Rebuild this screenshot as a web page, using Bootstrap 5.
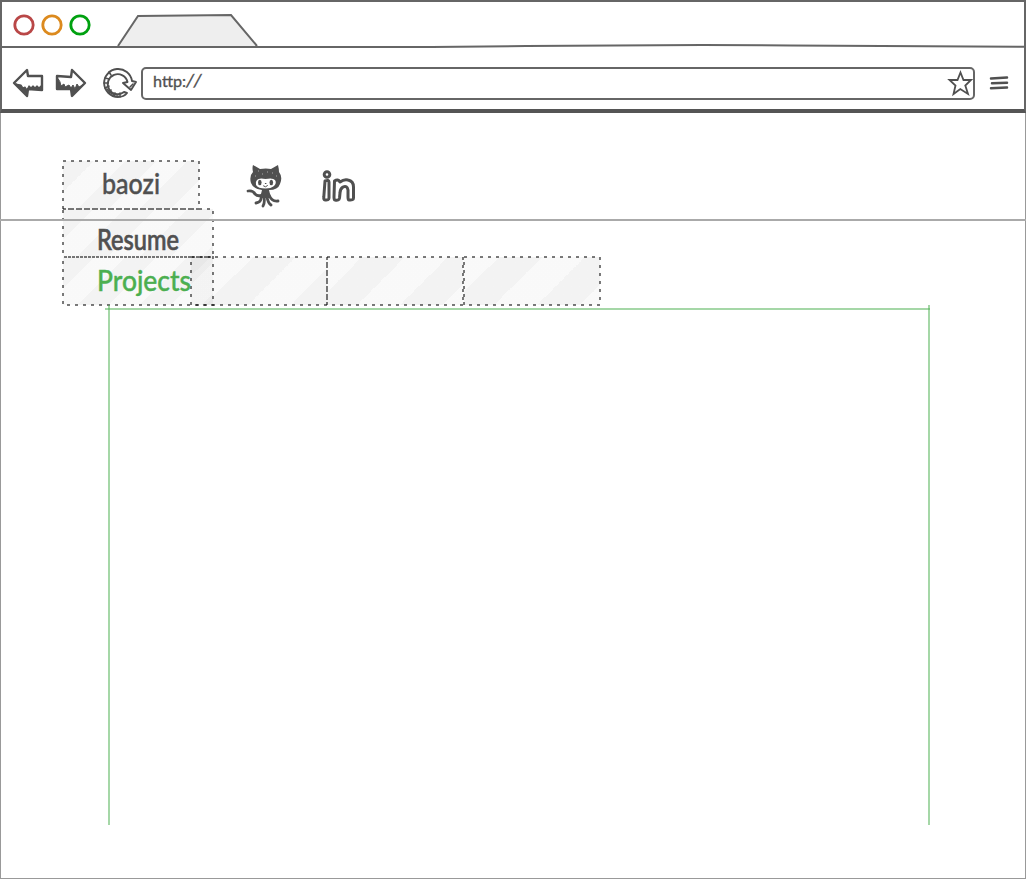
<!DOCTYPE html>
<html lang="en">
<head>
<meta charset="utf-8">
<meta name="viewport" content="width=device-width, initial-scale=1">
<title>baozi</title>
<link href="https://cdn.jsdelivr.net/npm/bootstrap@5.3.0/dist/css/bootstrap.min.css" rel="stylesheet">
<style>
body{font-family:Lato,"Open Sans",sans-serif;color:#505050;background:#fff}
svg{display:block;overflow:visible}
.browser{height:879px}
.chrome-head{height:113px;border:2px solid #666;border-bottom:4px solid #555}
.tab-strip{height:44px;padding-left:11px}
.tool-row{height:63px;padding:7px 15px 0 10px}
.address{height:33px;border:2px solid #666;border-radius:5px;margin-left:5px}
.canvas-area{border:1px solid #999;border-top:0}
.node{position:absolute}
.rule{position:absolute;background:#aaa;height:2px}
.guide{position:absolute;background:rgba(76,175,80,.5)}
.sketch{fill:none;stroke:#505050;stroke-linecap:round;stroke-linejoin:round}
.frame-line{fill:none;stroke:#000;stroke-opacity:.52;stroke-width:2;stroke-dasharray:3 5}
.arrow-next{margin-left:11px}
.reload{margin-left:15px}
.menu-lines{margin-left:16px}
</style>
</head>
<body>
<div class="browser d-flex flex-column position-relative overflow-hidden">
  <svg width="0" height="0" class="position-absolute">
    <defs>
      <linearGradient id="stripe" gradientUnits="userSpaceOnUse" x1="0" y1="0" x2="31" y2="31" spreadMethod="repeat">
        <stop offset="0" stop-opacity=".047"/><stop offset=".5" stop-opacity=".047"/>
        <stop offset=".5" stop-opacity=".023"/><stop offset="1" stop-opacity=".023"/>
      </linearGradient>
      <linearGradient id="wide" gradientUnits="userSpaceOnUse" x1="17.5" y1="17.5" x2="60.5" y2="60.5" spreadMethod="repeat">
        <stop offset="0" stop-opacity=".047"/><stop offset=".5" stop-opacity=".047"/>
        <stop offset=".5" stop-opacity=".023"/><stop offset="1" stop-opacity=".023"/>
      </linearGradient>
      <linearGradient id="wide-shift" href="#wide" gradientTransform="translate(27 0)"/>
    </defs>
  </svg>

  <header class="chrome-head flex-shrink-0">
    <div class="tab-strip d-flex">
      <svg width="78" height="44" fill="none" stroke-width="2.8">
        <circle cx="11" cy="23" r="9.2" stroke="#b94747"/>
        <circle cx="39" cy="23" r="9.2" stroke="#dc8a1e"/>
        <circle cx="67" cy="23" r="9.2" stroke="#00a110"/>
      </svg>
      <svg width="140" height="44" class="ms-4"><path d="M3 44 23 14 116 13 142 44" fill="#eee" stroke="#666" stroke-width="2"/></svg>
    </div>
    <svg width="100%" height="2" viewBox="0 0 1022 2" preserveAspectRatio="none"><path d="M0 1H430C520 0 630-1.200 700-1C810-.5 930 .7 1022 .8" fill="none" stroke="#666" stroke-width="2"/></svg>
    <div class="tool-row d-flex align-items-center">
      <svg width="32" height="30" viewBox="0 0 32 30" class="sketch flex-shrink-0" stroke-width="2.4">
        <path d="M2 15 15 2 16 8 30 8 30 22 16 21 15 28Z"/>
        <path d="M4 16 15 26V21H29L29 18 27 20 25 18 23 20 21 18 19 20 17 18 15 22 13 19 11 20 9 17Z" fill="#505050" stroke-width="1.2"/>
      </svg>
      <svg width="32" height="30" viewBox="0 0 32 30" class="sketch flex-shrink-0 arrow-next" stroke-width="2.4">
        <path d="M2 8 16 9 17 2 30 15 17 28 16 21 2 21Z"/>
        <path d="M3 11V20H16L18 27 28 17 24 19 22 16 20 21 18 17 16 20 14 17 12 18 10 19 9 16 6 18 5 14Z" fill="#505050" stroke-width="1"/>
      </svg>
      <svg width="34" height="32" viewBox="0 0 34 32" class="sketch flex-shrink-0 reload" stroke-width="1.9">
        <path d="M25 26Q22 30 16 30A14 14 0 1 1 30 14L34 15 29 23 21 16 25.500 15A10 10 0 1 0 22 25Z"/>
        <path d="M3 11 7 12M2 16H6M3 21 7 19M7 26 9 23M12 29 13 26M18 30V26M7 5 9 8" stroke-width="1.6"/>
        <path d="M28 20 31 17M5 22Q9 28 16 28" stroke-width="1.6"/>
      </svg>
      <div class="address d-flex flex-grow-1 align-items-center justify-content-between">
        <svg width="65" height="28"><g font-size="15" font-weight="400" fill="#505050" stroke="#505050" stroke-width=".3"><text x="10" y="18" textLength="52" lengthAdjust="spacingAndGlyphs">http:<tspan font-size="18" font-style="italic" letter-spacing="3">//</tspan></text></g></svg>
        <svg width="25" height="28" viewBox="0 0 25 28" class="sketch" stroke-width="1.8"><path d="M12.500 3.500 15.500 11 23 11 17.300 16.500 20 25 12.300 20 5.500 25 7.500 16.500 1.500 11H9.500Z" stroke-linejoin="miter"/></svg>
      </div>
      <svg width="18" height="14" viewBox="0 0 18 14" class="sketch flex-shrink-0 menu-lines" stroke-width="2.5"><path d="M0 2.500 16 1.500M1 7.200 16 6.800M0 12.300 16 11.500"/></svg>
    </div>
  </header>

  <main class="canvas-area flex-grow-1"></main>

  <!-- freely placed wireframe items -->
  <svg class="node" style="left:63px;top:161px" width="136" height="48"><rect width="136" height="48" fill="url(#stripe)"/><path class="frame-line" d="M0 0H136V48H0Z"/></svg>
  <svg class="node" style="left:63px;top:209px" width="150" height="48"><rect width="150" height="48" fill="url(#stripe)"/><path class="frame-line" d="M0 0H150V48H0Z"/></svg>
  <svg class="node" style="left:63px;top:257px" width="150" height="48"><rect width="150" height="48" fill="url(#stripe)"/><path class="frame-line" d="M0 0H150V48H0Z" stroke-dashoffset="3"/></svg>
  <svg class="node" style="left:191px;top:257px" width="136" height="48"><rect width="136" height="48" fill="url(#wide-shift)"/><path class="frame-line" d="M0 0H136V48H0Z"/></svg>
  <svg class="node" style="left:327px;top:257px" width="136" height="48"><rect width="136" height="48" fill="url(#wide)"/><path class="frame-line" d="M0 0H136V48H0Z"/></svg>
  <svg class="node" style="left:464px;top:257px" width="136" height="48"><rect width="136" height="48" fill="url(#wide)"/><path class="frame-line" d="M0 0H136V48H0Z"/></svg>
  <div class="rule w-100" style="top:219px"></div>

  <svg class="node" style="left:102px;top:165px" width="60" height="36"><text x="0" y="29" font-size="28" font-weight="500" fill="#505050" stroke="#505050" stroke-width=".4" textLength="58" lengthAdjust="spacingAndGlyphs">baozi</text></svg>
  <svg class="node" style="left:97px;top:220px" width="84" height="36"><text x="0" y="30" font-size="29" font-weight="500" fill="#505050" stroke="#505050" stroke-width=".7" textLength="82" lengthAdjust="spacingAndGlyphs">Resume</text></svg>
  <svg class="node" style="left:97px;top:260px" width="96" height="40"><text x="0" y="31" font-size="29" font-weight="500" fill="#4caf50" stroke="#4caf50" stroke-width=".4" textLength="94" lengthAdjust="spacingAndGlyphs">Projects</text></svg>

  <svg class="node" style="left:245px;top:164px" width="38" height="44" viewBox="0 0 38 44">
    <path d="M8 1 15 5Q21 4 26 5L33 1Q34 5 34 8Q38 13 35 20Q33 26 24 26L26 34H15L17 26Q8 25 6 19Q4 12 8 8Q7 4 8 1Z" fill="#505050"/>
    <path d="M17 31Q13 33 10 30Q8 26 3 27M16 32Q17 38 11 39M19 33Q20 39 18 42M22 33Q23 39 26 41M24 31Q27 38 33 37" class="sketch" stroke-width="2.8"/>
    <path d="M12 16Q14 13.500 20.500 15Q28 13.500 30 16Q32 19 29 22Q26 24.500 20.500 24.500Q13 24.500 11 21Q10 18 12 16Z" fill="#fff"/>
    <ellipse cx="14.800" cy="18.500" rx="1.8" ry="2.7" fill="#505050"/><ellipse cx="26.300" cy="18.500" rx="1.8" ry="2.7" fill="#505050"/>
    <path d="M18.500 22Q20.500 24 22.500 21.700M20.300 19.500H21" class="sketch" stroke-width="1"/>
    <path d="M13 7H14M17 10H18M22 8H23M27 9H28M10 12H11M31 12H32" stroke="#aaa" stroke-width="1"/>
  </svg>
  <svg class="node" style="left:321px;top:170px" width="36" height="34" viewBox="0 0 36 34">
    <g class="sketch" stroke-width="3"><circle cx="6" cy="4.500" r="2.800"/><path d="M4 11Q8 9.500 8 12L8 28Q8 30.500 4 30Q2.500 30 2.800 27Z"/><path d="M13.500 11Q17 8.500 19 12Q23 9 27 10Q32.500 11 32.500 17L32.500 28Q32.500 30.500 28 30Q27 30 27 27V20Q26 15 22 17Q19 19 19 23L18.500 28Q18 31 14 30Q13 30 13 27Z"/></g>
  </svg>

  <div class="guide" style="left:105px;top:308px;width:825px;height:2px"></div>
  <div class="guide" style="left:108px;top:305px;width:2px;height:520px"></div>
  <div class="guide" style="left:928px;top:305px;width:2px;height:520px"></div>
</div>
<script src="https://cdn.jsdelivr.net/npm/bootstrap@5.3.0/dist/js/bootstrap.bundle.min.js"></script>
</body>
</html>
